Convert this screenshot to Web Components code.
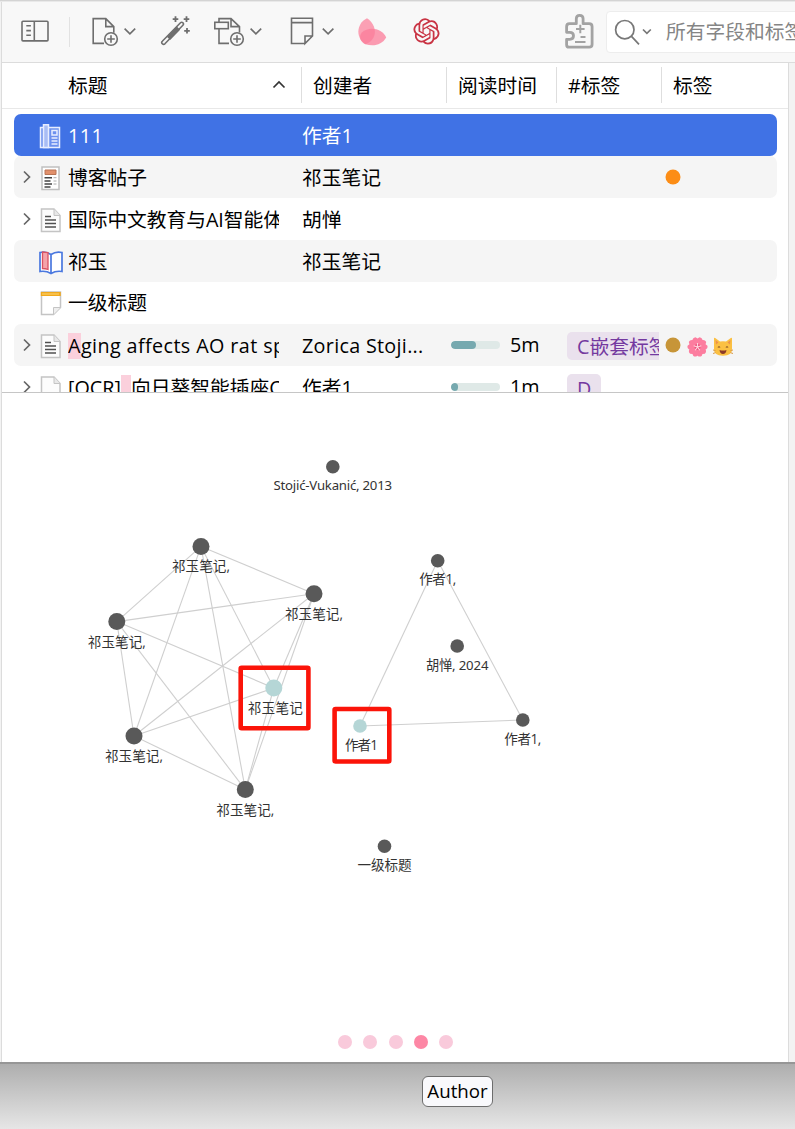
<!DOCTYPE html>
<html lang="zh">
<head>
<meta charset="utf-8">
<title>Library</title>
<style>
html,body{margin:0;padding:0;background:#fff}
body{width:795px;height:1129px;overflow:hidden;font-family:"Open Sans","Noto Sans CJK SC",sans-serif;font-size:19.75px;color:#000}
</style>
</head>
<body>
<library-window></library-window>
<script>
const define=(name,html,after)=>{
  const t=document.createElement('template');
  t.innerHTML=html;
  customElements.define(name,class extends HTMLElement{
    constructor(){super();this.attachShadow({mode:'open'}).append(t.content.cloneNode(true));}
    connectedCallback(){if(after)after(this,this.shadowRoot);}
  });
};

const ICONS={
 sidebar:['20 12 30 40','<rect x="22" y="21.3" width="26" height="19.6" rx="1"/><path d="M34.3 21v20M26.3 25.8h4.6M26.3 30.6h4.6M26.3 35.3h4.6"/>'],
 newitem:['90 12 48 40','<path d="M104 43.4H93.2V18.6h12.6l8 8v6.2M105.8 18.6v8h8"/><circle cx="111" cy="39" r="6.3"/><path d="M111 35.2v7.6M107.2 39h7.6M124.6 28.6l5.3 5.3 5.3-5.3"/>'],
 wand:['158 12 36 40','<path d="M162.300 41.300l18.200-18.500q1.200-1.200 2.400 0t0 2.400l-18 18.600q-1.300 1.200-2.600-.1t0-2.400z"/><path d="M168.500 38.400l10-10.200" stroke-width="4.600"/><path d="M175.500 16.300v5.600M172.700 19.100h5.600M186.500 16.300v5.600M183.700 19.100h5.600M187 28v5.600M184.200 30.800h5.600" stroke-width="1.800"/>'],
 attach:['212 12 52 40','<path d="M229 43.400h-10V29M219 22v-3.400h12l8.500 8v6M231 18.600v8h8.500"/><rect x="214.800" y="22.300" width="13.500" height="6.400"/><circle cx="237" cy="39" r="6.300"/><path d="M237 35.200v7.600M233.200 39h7.600M250.600 28.600l5.300 5.300 5.300-5.300"/>'],
 note:['288 12 48 40','<path d="M304.500 43.500h-13V18.200h21V36l-7.500 7.500V36h7.500M291.500 22.600h21M322.800 28.600l5.300 5.300 5.300-5.300"/>'],
 petals:['356 12 32 40','<g stroke="none"><path d="M367 18.200C356 23.500 355.500 38.500 365.500 44.200C378 40 377.500 25 367 18.200z" fill="#fba0b4"/><path d="M386.200 37.500C382.500 29 369.500 25.500 361.800 32.500C358 37 361 42.500 365.500 44.200C374 47 382 44.500 386.200 37.500z" fill="#fb7d9a" opacity=".76"/></g>'],
 openai:['412 12 30 40','<path transform="translate(413.400 18.300) scale(1.090)" fill="#c93444" stroke="none" d="M22.2819 9.8211a5.9847 5.9847 0 0 0-.5157-4.9108 6.0462 6.0462 0 0 0-6.5098-2.9A6.0651 6.0651 0 0 0 4.9807 4.1818a5.9847 5.9847 0 0 0-3.9977 2.9 6.0462 6.0462 0 0 0 .7427 7.0966 5.98 5.98 0 0 0 .511 4.9107 6.051 6.051 0 0 0 6.5146 2.9001A5.9847 5.9847 0 0 0 13.2599 24a6.0557 6.0557 0 0 0 5.7718-4.2058 5.9894 5.9894 0 0 0 3.9977-2.9001 6.0557 6.0557 0 0 0-.7475-7.0729zm-9.022 12.6081a4.4755 4.4755 0 0 1-2.8764-1.0408l.1419-.0804 4.7783-2.7582a.7948.7948 0 0 0 .3927-.6813v-6.7369l2.02 1.1686a.071.071 0 0 1 .038.052v5.5826a4.504 4.504 0 0 1-4.4945 4.4944zm-9.6607-4.1254a4.4708 4.4708 0 0 1-.5346-3.0137l.142.0852 4.783 2.7582a.7712.7712 0 0 0 .7806 0l5.8428-3.3685v2.3324a.0804.0804 0 0 1-.0332.0615L9.74 19.9502a4.4992 4.4992 0 0 1-6.1408-1.6464zM2.3408 7.8956a4.485 4.485 0 0 1 2.3655-1.9728V11.6a.7664.7664 0 0 0 .3879.6765l5.8144 3.3543-2.0201 1.1685a.0757.0757 0 0 1-.071 0l-4.8303-2.7865A4.504 4.504 0 0 1 2.3408 7.872zm16.5963 3.8558L13.1038 8.364 15.1192 7.2a.0757.0757 0 0 1 .071 0l4.8303 2.7913a4.4944 4.4944 0 0 1-.6765 8.1042v-5.6772a.79.79 0 0 0-.407-.667zm2.0107-3.0231l-.142-.0852-4.7735-2.7818a.7759.7759 0 0 0-.7854 0L9.409 9.2297V6.8974a.0662.0662 0 0 1 .0284-.0615l4.8303-2.7866a4.4992 4.4992 0 0 1 6.6802 4.66zM8.3065 12.863l-2.02-1.1638a.0804.0804 0 0 1-.038-.0567V6.0742a4.4992 4.4992 0 0 1 7.3757-3.4537l-.142.0805L8.704 5.459a.7948.7948 0 0 0-.3927.6813zm1.0976-2.3654l2.602-1.4998 2.6069 1.4998v2.9994l-2.5974 1.4997-2.6067-1.4997Z"/>'],
 plugin:['564 12 30 40','<g stroke="#a3a3a3"><path stroke-width="2.800" stroke-linejoin="round" d="M569.500 23.700h6.800v-5q0-3.400 3.400-3.400t3.400 3.400v5h6q3 0 3 3v17.500q0 3-3 3h-20q-2.500 0-2.500-2.500v-5.400h3.200q3.700 0 3.700-3.500t-3.700-3.500h-3.200v-5.600q0-3 2.900-3z"/><path stroke-width="2" d="M580.300 24.800v8.400M576 29h8.600M580.500 37h5M575 42h10.500"/></g>']
};
define('tool-icon',`<style>:host{display:block;flex:none}svg{display:block}</style>
<svg fill="none" stroke="#6e6e6e" stroke-width="1.600"></svg>`,(h,r)=>{
  const [vb,body]=ICONS[h.getAttribute('name')],s=r.querySelector('svg'),v=vb.split(' ');
  s.setAttribute('viewBox',vb);s.setAttribute('width',v[2]);s.setAttribute('height',v[3]);s.innerHTML=body;
});

define('search-field',`<style>
:host{display:flex;align-items:center;box-sizing:border-box;width:200px;height:42px;background:#fff;border:1px solid #ededed;border-radius:4px;flex:none;color:#858585;white-space:nowrap;padding-left:7px}
svg{flex:none;margin:0 13px 0 -1px}
span{line-height:30px}
</style>
<svg width="40" height="40" viewBox="613 11 40 40" fill="none" stroke="#777" stroke-width="1.700"><circle cx="624.800" cy="28.700" r="9.200"/><path d="M631.500 35.400l7.500 8M643 28.500l3.900 3.800 3.900-3.800"/></svg><span><slot></slot></span>`);

define('tool-bar',`<style>
:host{display:flex;align-items:center;height:60px;background:#f8f8f8;border-bottom:1px solid #dcdcdc;box-sizing:content-box;overflow:hidden}
i{width:1px;height:30px;background:#e2e2e2;margin:0 20px 0 19px;flex:none}
tool-icon+tool-icon{margin-left:20px}
tool-icon[name=sidebar]{margin-left:18px}
tool-icon[name=attach]{margin-left:18px}
tool-icon[name=note],tool-icon[name=openai]{margin-left:24px}
tool-icon[name=plugin]{margin-left:122px}
search-field{margin-left:12px}
</style>
<tool-icon name="sidebar"></tool-icon><i></i><tool-icon name="newitem"></tool-icon><tool-icon name="wand"></tool-icon><tool-icon name="attach"></tool-icon><tool-icon name="note"></tool-icon><tool-icon name="petals"></tool-icon><tool-icon name="openai"></tool-icon><tool-icon name="plugin"></tool-icon><search-field>所有字段和标签</search-field>`);

define('list-header',`<style>
:host{display:grid;grid-template-columns:299px 145px 110px 105px 1fr;align-items:center;height:45px;border-bottom:1px solid #e8e8e8;line-height:38px;white-space:nowrap;background:#fff}
div{box-sizing:border-box;height:36px;padding-left:11px;border-left:1px solid #dedede;position:relative;top:-1px}
.a{padding-left:66px;border:0;display:flex;justify-content:space-between}
svg{margin:13px 15px 0 0}
</style>
<div class="a">标题<svg width="14" height="10" fill="none" stroke="#333" stroke-width="1.700"><path d="M1.500 7.500L7 2l5.500 5.500"/></svg></div><div>创建者</div><div>阅读时间</div><div>#标签</div><div>标签</div>`);

const DOC='<path d="M2.500 2h12.500l6 6.500V24.500h-18.500z" fill="#fcfcfc" stroke="#c4c4c4" stroke-width="1.500"/><path d="M15 2v6.500h6" fill="#e8e8e8" stroke="#c4c4c4"/>';
const TYPES={
 news:'<g fill="none" stroke="#e7edff" stroke-width="1.500"><path d="M9.500 4.500h11v20h-19v-20h2.500" fill="#6c90ee"/><path d="M4.500 1.800h5v22.700h-5z" fill="#a9bdf5"/><path d="M13 7.500h5v4.500h-5zM12.500 15h6M12.500 18h6M12.500 21h6"/></g>',
 blog:'<path d="M3 2h17v22.500H3z" fill="#fff" stroke="#c0c0c0" stroke-width="1.500"/><path d="M6 5h11v4.500H6z" fill="#e2906b" stroke="#b97556"/><path d="M5.500 12.700h7.500M5.500 16h6M5.500 19h7.500M5.500 22h6" stroke="#444" stroke-width="1.500"/><path d="M14.500 12.700h3M14.500 16h3M14.500 19h3" stroke="#aaa"/>',
 article:DOC+'<path d="M6 9.500h6M6 13h11M6 16.500h11M6 20h11" stroke="#505050" stroke-width="1.600"/>',
 book:'<path d="M12 5.500Q7 2 1 3.500V22.500Q7 21.500 12 24.500Q17 21.500 23 22.500V3.500Q17 2 12 5.500V24.500" fill="#fff" stroke="#4a78df" stroke-width="1.700"/><path d="M3.500 3v16.500q3 0 5.500 1V3.600z" fill="#f4a3aa" stroke="#da5262" stroke-width="1.300"/>',
 note:'<path d="M2.500 2h19v15.500l-7 7h-12z" fill="#fff" stroke="#c4c4c4" stroke-width="1.500"/><path d="M21.500 17.500h-7v7" fill="#eee" stroke="#c4c4c4"/><path d="M1.800 2h20v4h-20z" fill="#f0a91f"/><path d="M3 4h17" stroke="#ffd777"/>',
 page:DOC
};
define('list-row',`<style>
:host{display:grid;grid-template-columns:288px 149px 116px 98px 1fr;height:42px;border-radius:7px;margin:0 11px 0 12px;align-items:center;white-space:nowrap;line-height:44px;flex:none}
:host([striped]){background:#f5f5f5}
:host([selected]){background:#4072e5;color:#fff}
.t{display:grid;grid-template-columns:24px 30px 211px;align-items:center;height:42px}
.x{display:block;margin-left:8px;margin-top:-2px}
.k{margin-left:.5px;margin-top:-1px}
.label{overflow:hidden;height:42px;line-height:42px}
:host(:not([open])) .x{visibility:hidden}
svg{display:block}
</style>
<div class="t"><svg class="x" width="10" height="14" fill="none" stroke="#666" stroke-width="1.700"><path d="M2 1.500L7.500 7L2 12.500"/></svg><svg class="k" width="24" height="26" fill="none"></svg><div class="label"><slot></slot></div></div>
<div><slot name="creator"></slot></div><div><slot name="time"></slot></div><div><slot name="nested"></slot></div><div><slot name="tags"></slot></div>`,(h,r)=>{r.querySelector('.k').innerHTML=TYPES[h.getAttribute('type')]});

define('read-time',`<style>
:host{display:flex;align-items:center;margin-top:-2px}
div{width:49px;height:8px;border-radius:4px;background:#dfe9e7;overflow:hidden;margin-right:10px}
i{display:block;height:8px;border-radius:4px;background:#76a9af}
</style><div><i></i></div><slot></slot>`,(h,r)=>{r.querySelector('i').style.width=h.getAttribute('fill')+'px'});

define('nested-tag',`<style>
:host{display:block;overflow:hidden;width:92px;height:28px;line-height:29px;margin-top:-1px}
span{display:inline-block;height:28px;padding:0 10px;border-radius:5px;background:#eae1ed;color:#7439a0}
</style><span><slot></slot></span>`);

define('tag-marks',`<style>:host{display:flex;align-items:center;height:42px;margin-top:-2px}svg{display:block}</style><svg width="72" height="42"></svg>`,(h,r)=>{
  let s=`<circle cx="8" cy="21" r="7.500" fill="${h.getAttribute('color')}"/>`;
  if(h.hasAttribute('emoji')){
    s+='<g transform="translate(32.500 23)">';
    for(let a=0;a<360;a+=72)s+=`<path transform="rotate(${a})" d="M0 0C-7-3-6-9.500-2-9.800L0-8.500L2-9.800C6-9.500 7-3 0 0z" fill="#fc7d9f"/>`;
    s+='<circle r="3" fill="#ee5380"/><path d="M0-4V0L-3.800-1.200M0 0L3.800-1.200M-2.300 3.200L0 0L2.300 3.200" fill="none" stroke="#ffd5dd" stroke-width="1.100"/></g>';
    s+='<path d="M49 14.500q0-1.200 1.200-.5l4.800 3.500q3-.6 6 0l4.800-3.500q1.200-.7 1.200.5v10q.5 7-9 7.200q-9.500-.2-9-7.200z" fill="#fbc043"/><path d="M50.500 16l3 2.500-2.500 2zM65.500 16l-3 2.500 2.500 2z" fill="#ee914b"/><path d="M53 23.500q1-1.500 2 0M61 23.500q1-1.500 2 0" fill="none" stroke="#8a5424" stroke-width="1.200"/><path d="M48 26l2.500.5M65.500 26.500l2.500-.5M48 29.500l2.500-.8M65.500 28.700l2.500.8" stroke="#d99a45"/><path d="M54.500 26q3.500 1.200 7 0q-.5 4-3.500 4t-3.500-4z" fill="#8c3a28"/>';
  }
  r.querySelector('svg').innerHTML=s;
});

define('item-list',`<style>
:host{display:flex;flex-direction:column;height:278px;padding-top:5px;overflow:hidden;border-bottom:1px solid #c6c6c6}
mark{background:#fbd0dc;color:inherit;line-height:26px;height:26px;display:inline-block}
.ls{letter-spacing:.4px}
</style>
<list-row selected type="news"><span class="ls">111</span><span slot="creator">作者1</span></list-row>
<list-row striped open type="blog">博客帖子<span slot="creator">祁玉笔记</span><tag-marks slot="tags" color="#fc8d16"></tag-marks></list-row>
<list-row open type="article"><span style="letter-spacing:-.05px">国际中文教育与AI智能体</span><span slot="creator">胡惮</span></list-row>
<list-row striped type="book">祁玉<span slot="creator">祁玉笔记</span></list-row>
<list-row type="note">一级标题</list-row>
<list-row striped open type="article"><span class="ls"><mark>A</mark>ging affects AO rat sp</span><span slot="creator" style="letter-spacing:.3px">Zorica Stoji...</span><read-time slot="time" fill="25">5m</read-time><nested-tag slot="nested">C嵌套标签</nested-tag><tag-marks slot="tags" color="#c79538" emoji></tag-marks></list-row>
<list-row open type="page"><span>[OCR]<mark style="width:10px">&nbsp;</mark>向日葵智能插座C</span><span slot="creator">作者1</span><read-time slot="time" fill="7">1m</read-time><nested-tag slot="nested">D</nested-tag></list-row>`);

/* Relation graph: free canvas of nodes and links. */
const N=[[201,546.400,8.500,'祁玉笔记,',58],[314,593.700,8.500,'祁玉笔记,',58],[116.800,621.600,8.500,'祁玉笔记,',58],[134,736,8.500,'祁玉笔记,',58],[245.300,789.600,8.500,'祁玉笔记,',58],[273.800,688,8.500,'祁玉笔记',55,1],[332.800,466.800,6.800,'Stojić-Vukanić, 2013',118.500],[437.700,560.800,6.800,'作者1,',37],[457.200,646,6.800,'胡惮, 2024',62.500],[522.800,720,6.800,'作者1,',37],[360,726,6.800,'作者1',33,1],[384.500,846.200,6.800,'一级标题',54]];
const E=[[0,1],[0,2],[0,3],[0,4],[0,5],[1,2],[1,3],[1,4],[1,5],[2,3],[2,4],[2,5],[3,4],[3,5],[4,5],[7,9],[7,10],[9,10]];
define('relation-graph',`<style>:host{display:block;height:650px;overflow:hidden}svg{display:block}text{font-size:13.600px;text-anchor:middle;fill:#333}</style><svg width="786" height="650" viewBox="2 393 786 650"></svg>`,(h,r)=>{
  let s='<g stroke="#cfcfcf" stroke-width="1.100">';
  for(const [a,b] of E)s+=`<line x1="${N[a][0]}" y1="${N[a][1]}" x2="${N[b][0]}" y2="${N[b][1]}"/>`;
  s+='</g>';
  for(const [x,y,q,,,c] of N)s+=`<circle cx="${x}" cy="${y}" r="${q}" fill="${c?'#b5d6d6':'#595959'}"/>`;
  for(const [x,y,q,t,w] of N){
    const latin=/20\d\d/.test(t);
    s+=`<text x="${x+(w==55||w==33?1.500:0)}" y="${y+(q>8?25:23.500)}" textLength="${w}"${latin?' style="font-family:\'Noto Sans\',\'Noto Sans CJK SC\',sans-serif;font-size:13.200px"':''}>${t}</text>`;
  }
  s+='<g fill="none" stroke="#fb1409" stroke-width="4.600"><rect x="240.700" y="667.800" width="67.700" height="60.500" rx="1"/><rect x="334.600" y="709" width="54.700" height="52.500" rx="1"/></g>';
  r.querySelector('svg').innerHTML=s;
});
define('page-dots',`<style>:host{display:flex;justify-content:center;align-items:center;gap:11.200px;height:14px}i{width:14px;height:14px;border-radius:50%;background:#f9cadb}i.on{background:#fd87a5}</style><i></i><i></i><i></i><i class="on"></i><i></i>`);

define('tool-tip',`<style>:host{display:block;box-sizing:border-box;width:71px;height:31px;border:1px solid #6d6d6d;border-radius:6px;background:#f9f9fc;text-align:center;line-height:28px;font-size:18.700px}</style><slot></slot>`);

define('library-window',`<style>
:host{display:flex;flex-direction:column;width:795px;height:1129px;overflow:hidden;background:#f3f3f3}
.top{height:1px;border-top:1px solid #d4d4d4;background:#e9e9e9;flex:none}
.pane{display:block;width:786px;height:1060px;border-left:1px solid #dcdcdc;border-right:1px solid #dcdcdc;background:#fff;margin-left:1px;flex:none}
tool-bar{width:794px}
page-dots{margin-top:-8px;width:787px}
.foot{flex:1;border-top:2px solid #969696;background:linear-gradient(#aeaeae,#e6e6e6);display:flex;padding:12px 0 0 422px;align-items:flex-start}
</style>
<div class="top"></div><div class="pane"><tool-bar></tool-bar><list-header></list-header><item-list></item-list><relation-graph></relation-graph><page-dots></page-dots></div>
<div class="foot"><tool-tip>Author</tool-tip></div>`);
</script>
</body>
</html>
